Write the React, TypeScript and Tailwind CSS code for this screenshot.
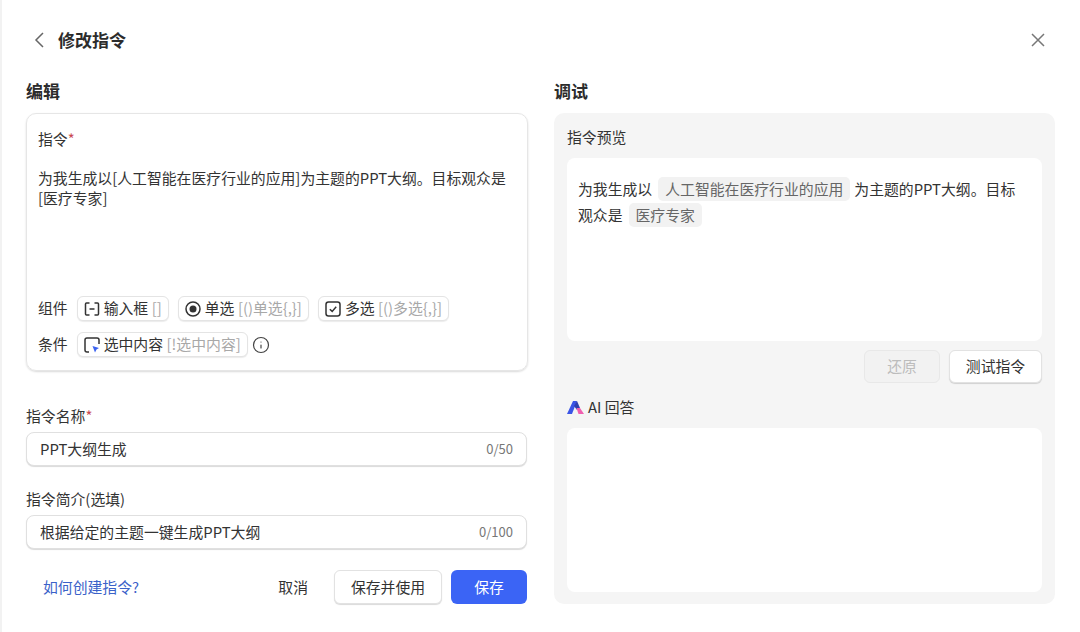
import { Info } from 'lucide-react'
import type { ReactNode } from 'react'

function Chip(props: { icon: ReactNode; label: string; hint: string }) {
  return (
    <div className="flex items-center h-[25px] px-[6px] gap-[4px] rounded-[6px] border border-[#e4e4e4] shadow-[0_1px_1px_rgba(0,0,0,0.08)] bg-white">
      {props.icon}
      <span className="text-[#333]">{props.label}</span>
      <span className="text-[#a8a8a8] -ml-[0.5px]">{props.hint}</span>
    </div>
  )
}

function Field(props: { label: string; required?: boolean; value: string; count: string }) {
  return (
    <div className="flex flex-col">
      <div className="h-[22px] leading-[22px] text-[#333]">
        {props.label}
        {props.required && <span className="text-[#c9474f]">*</span>}
      </div>
      <div className="mt-[5px] h-[34px] flex items-center justify-between px-[13px] rounded-[8px] border border-[#e0e0e0] shadow-[0_1px_1px_rgba(0,0,0,0.15)] bg-white">
        <span className="text-[#333]">{props.value}</span>
        <span className="text-[13px] text-[#777]">{props.count}</span>
      </div>
    </div>
  )
}

function Tag(props: { children: ReactNode }) {
  return <span className="inline-block ml-[6px] mr-[4px] px-[7px] h-[24px] leading-[24px] rounded-[5px] bg-[#f2f2f2] text-[#666]">{props.children}</span>
}

export default function App() {
  return (
    <div
      className="w-[1080px] h-[632px] bg-white border-l-2 border-[#f2f2f2] overflow-hidden text-[14.85px] text-[#333]"
      style={{ fontFamily: '"Noto Sans CJK SC", "Liberation Sans", sans-serif' }}
    >
      <div className="h-[80px] flex items-center justify-between pl-[28px] pr-[34px]">
        <div className="flex items-center gap-[8px]">
          <svg width="20" height="20" viewBox="0 0 20 20" fill="none" stroke="#666" strokeWidth="1.5">
            <path d="M13 3L6 10L13 17" />
          </svg>
          <span className="text-[17px] font-bold text-[#2c2c2c]">修改指令</span>
        </div>
        <svg width="16" height="16" viewBox="0 0 16 16" fill="none" stroke="#777" strokeWidth="1.5">
          <path d="M2 2L14 14M14 2L2 14" />
        </svg>
      </div>

      <div className="grid grid-cols-[502px_501px] gap-[26px] pl-[24px]">
        <div className="flex flex-col">
          <h2 className="h-[22px] leading-[22px] text-[17px] font-bold text-[#2c2c2c]">编辑</h2>
          <div className="mt-[11px] h-[258px] flex flex-col pl-[11px] pr-[12px] pt-[14px] rounded-[10px] border border-[#e6e6e6] shadow-[0_1px_2px_rgba(0,0,0,0.15)]">
            <div className="h-[22px] leading-[22px]">
              指令<span className="text-[#c9474f]">*</span>
            </div>
            <div className="mt-[18px] leading-[20px] text-[#333]">
              为我生成以[人工智能在医疗行业的应用]为主题的PPT大纲。目标观众是
              <br />
              [医疗专家]
            </div>
            <div className="mt-auto mb-[13px] flex flex-col gap-[11px]">
              <div className="flex items-center gap-[9px]">
                <span>组件</span>
                <Chip
                  label="输入框"
                  hint="[]"
                  icon={
                    <svg width="16" height="16" viewBox="0 0 16 16" fill="none" stroke="#333" strokeWidth="1.5">
                      <path d="M5.5 2H2.5Q1.5 2 1.5 3V13Q1.5 14 2.5 14H5.5M10.5 2H13.5Q14.5 2 14.5 3V13Q14.5 14 13.5 14H10.5M5.5 8H10.5" />
                    </svg>
                  }
                />
                <Chip
                  label="单选"
                  hint="[()单选{,}]"
                  icon={
                    <svg width="16" height="16" viewBox="0 0 16 16" fill="none">
                      <circle cx="8" cy="8" r="7" stroke="#333" strokeWidth="1.5" />
                      <circle cx="8" cy="8" r="3.5" fill="#333" />
                    </svg>
                  }
                />
                <Chip
                  label="多选"
                  hint="[()多选{,}]"
                  icon={
                    <svg width="16" height="16" viewBox="0 0 16 16" fill="none" stroke="#333" strokeWidth="1.5">
                      <rect x="1" y="1" width="14" height="14" rx="2.5" />
                      <path d="M4.8 8.2L7.2 10.4L11.2 5.8" />
                    </svg>
                  }
                />
              </div>
              <div className="flex items-center gap-[9px]">
                <span>条件</span>
                <Chip
                  label="选中内容"
                  hint="[!选中内容]"
                  icon={
                    <svg width="16" height="16" viewBox="0 0 16 16" fill="none">
                      <path d="M5 15H3Q1 15 1 13V3Q1 1 3 1H13Q15 1 15 3V7" stroke="#333" strokeWidth="1.5" />
                      <path d="M8.5 9L15 11L12.5 12.5L11 15.5Z" fill="#3b62f0" />
                    </svg>
                  }
                />
                <Info className="w-[18px] h-[18px] text-[#444] -ml-[5px]" strokeWidth={1.6} />
              </div>
            </div>
          </div>
          <div className="mt-[34px] pr-[1px] flex flex-col gap-[22px]">
            <Field label="指令名称" required value="PPT大纲生成" count="0/50" />
            <Field label="指令简介(选填)" value="根据给定的主题一键生成PPT大纲" count="0/100" />
          </div>
          <div className="mt-[21px] pr-[1px] flex items-center pl-[17px]">
            <span className="text-[#3b62c9]">如何创建指令?</span>
            <span className="ml-auto mr-[26px]">取消</span>
            <button className="w-[108px] h-[34px] rounded-[6px] border border-[#e2e2e2] shadow-[0_1px_1px_rgba(0,0,0,0.15)] bg-white">
              保存并使用
            </button>
            <button className="ml-[9px] w-[76px] h-[34px] rounded-[6px] bg-[#3b64f5] text-white">保存</button>
          </div>
        </div>

        <div className="flex flex-col">
          <h2 className="h-[22px] leading-[22px] text-[17px] font-bold text-[#2c2c2c]">调试</h2>
          <div className="mt-[11px] h-[491px] flex flex-col rounded-[10px] bg-[#f5f5f5] px-[13px] pt-[13px] pb-[12px]">
            <div className="h-[22px] leading-[22px]">指令预览</div>
            <div className="mt-[10px] h-[183px] rounded-[8px] bg-white pl-[11px] pr-[10px] pt-[18px] leading-[26px]">
              <span>为我生成以</span>
              <Tag>人工智能在医疗行业的应用</Tag>
              <span>为主题的PPT大纲。目标</span>
              <br />
              <span>观众是</span>
              <Tag>医疗专家</Tag>
            </div>
            <div className="mt-[9px] flex justify-end gap-[9px]">
              <button className="w-[76px] h-[33px] rounded-[6px] border border-[#e8e8e8] bg-[#f2f2f2] text-[#bcbcbc]">还原</button>
              <button className="w-[93px] h-[33px] rounded-[6px] border border-[#e2e2e2] shadow-[0_1px_1px_rgba(0,0,0,0.15)] bg-white">
                测试指令
              </button>
            </div>
            <div className="mt-[13px] h-[22px] flex items-center gap-[4px]">
              <svg width="17" height="13" viewBox="0 0 17 13">
                <path d="M6 0H10L5 13H0Z" fill="#3b55e6" />
                <path d="M7 5L10 0L13 7L10 9Z" fill="#2f3fb0" />
                <path d="M9.5 7H13L17 13H11.5Z" fill="#f05fb0" />
              </svg>
              <span>AI 回答</span>
            </div>
            <div className="mt-[10px] flex-1 rounded-[8px] bg-white" />
          </div>
        </div>
      </div>
    </div>
  )
}
